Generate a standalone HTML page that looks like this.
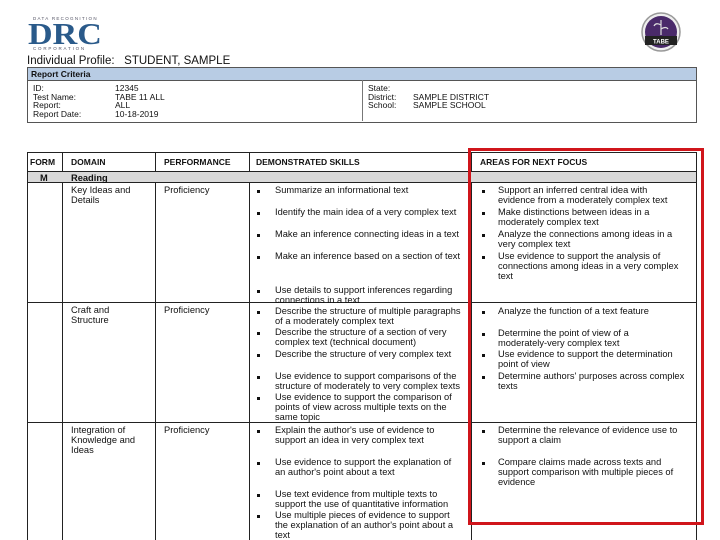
<!DOCTYPE html>
<html><head><style>
body{margin:0;width:720px;height:540px;background:#fff;position:relative;overflow:hidden;font-family:"Liberation Sans",sans-serif;color:#111}
.a{position:absolute;white-space:nowrap;font-size:9.3px;line-height:10px}
.b{font-weight:bold}
.l{position:absolute;background:#222}
.bu{position:absolute;width:3px;height:3px;background:#111}
.c{position:absolute;white-space:nowrap;font-size:8.5px;line-height:8.5px}
</style></head><body>
<div class="a" style="left:33px;top:16px;font-size:4.5px;line-height:5px;color:#556;letter-spacing:1.3px">DATA RECOGNITION</div>
<div class="a b" style="left:28px;top:20px;font-family:'Liberation Serif',serif;font-size:31px;line-height:28px;color:#2a5a8a;transform:scaleX(1.1);transform-origin:left">DRC</div>
<div class="a" style="left:33px;top:46px;font-size:4.5px;line-height:5px;color:#556;letter-spacing:1.8px">CORPORATION</div>
<svg style="position:absolute;left:640px;top:11px" width="42" height="42" viewBox="0 0 42 42">
<circle cx="21" cy="21" r="19" fill="#eee" stroke="#999" stroke-width="1.5"/>
<circle cx="21" cy="21" r="16" fill="#4a2a6a"/>
<rect x="5" y="25" width="32" height="9" fill="#222"/>
<text x="21" y="32.5" font-size="6" fill="#fff" text-anchor="middle" font-family="Liberation Sans" font-weight="bold">TABE</text>
<path d="M21 24 V9 M21 14 q-5 -3 -7 1 M21 18 q5 -3 7 0" stroke="#ddd" stroke-width="1.2" fill="none"/>
</svg>
<div class="a" style="left:27px;top:55px;font-size:11.5px;line-height:13px">Individual Profile:&nbsp;&nbsp; STUDENT, SAMPLE</div>
<div style="position:absolute;left:27px;top:67px;width:668px;height:54px;border:1px solid #555;"></div>
<div style="position:absolute;left:28px;top:68px;width:668px;height:12px;background:#b8cce4;border-bottom:1px solid #555"></div>
<div class="a b" style="left:31px;top:69px;font-size:8.5px">Report Criteria</div>
<div class="l" style="left:362px;top:80px;width:1px;height:41px;background:#777"></div>
<div class="c" style="left:33px;top:84px">ID:<br>Test Name:<br>Report:<br>Report Date:</div>
<div class="c" style="left:115px;top:84px">12345<br>TABE 11 ALL<br>ALL<br>10-18-2019</div>
<div class="c" style="left:368px;top:84px">State:<br>District:<br>School:</div>
<div class="c" style="left:413px;top:84px"><br>SAMPLE DISTRICT<br>SAMPLE SCHOOL</div>
<div style="position:absolute;left:28px;top:172px;width:668px;height:10px;background:#d9d9d9"></div>
<div class="l" style="left:27px;top:152px;width:670px;height:1px"></div>
<div class="l" style="left:27px;top:171px;width:670px;height:1px"></div>
<div class="l" style="left:27px;top:182px;width:670px;height:1px"></div>
<div class="l" style="left:27px;top:302px;width:670px;height:1px"></div>
<div class="l" style="left:27px;top:422px;width:670px;height:1px"></div>
<div class="l" style="left:27px;top:152px;width:1px;height:388px"></div>
<div class="l" style="left:62px;top:152px;width:1px;height:20px"></div>
<div class="l" style="left:62px;top:182px;width:1px;height:358px"></div>
<div class="l" style="left:155px;top:152px;width:1px;height:20px"></div>
<div class="l" style="left:155px;top:182px;width:1px;height:358px"></div>
<div class="l" style="left:249px;top:152px;width:1px;height:20px"></div>
<div class="l" style="left:249px;top:182px;width:1px;height:358px"></div>
<div class="l" style="left:471px;top:152px;width:1px;height:20px"></div>
<div class="l" style="left:471px;top:182px;width:1px;height:358px"></div>
<div class="l" style="left:696px;top:152px;width:1px;height:388px"></div>
<div class="a b" style="left:30px;top:157px;font-size:8.5px">FORM</div>
<div class="a b" style="left:71px;top:157px;font-size:8.5px">DOMAIN</div>
<div class="a b" style="left:164px;top:157px;font-size:8.5px">PERFORMANCE</div>
<div class="a b" style="left:256px;top:157px;font-size:8.5px">DEMONSTRATED SKILLS</div>
<div class="a b" style="left:480px;top:157px;font-size:8.5px">AREAS FOR NEXT FOCUS</div>
<div class="a b" style="left:40px;top:173px">M</div>
<div class="a b" style="left:71px;top:173px">Reading</div>
<div class="a" style="left:71px;top:185px">Key Ideas and<br>Details</div>
<div class="a" style="left:164px;top:185px">Proficiency</div>
<div class="a" style="left:71px;top:305px">Craft and<br>Structure</div>
<div class="a" style="left:164px;top:305px">Proficiency</div>
<div class="a" style="left:71px;top:425px">Integration of<br>Knowledge and<br>Ideas</div>
<div class="a" style="left:164px;top:425px">Proficiency</div>
<div class="bu" style="left:257px;top:190px"></div><div class="a" style="left:275px;top:185px">Summarize an informational text</div>
<div class="bu" style="left:257px;top:212px"></div><div class="a" style="left:275px;top:207px">Identify the main idea of a very complex text</div>
<div class="bu" style="left:257px;top:234px"></div><div class="a" style="left:275px;top:229px">Make an inference connecting  ideas in a text</div>
<div class="bu" style="left:257px;top:256px"></div><div class="a" style="left:275px;top:251px">Make an inference based on a section of text</div>
<div class="bu" style="left:257px;top:290px"></div><div class="a" style="left:275px;top:285px">Use details to support inferences regarding<br>connections in a text</div>
<div class="bu" style="left:257px;top:311px"></div><div class="a" style="left:275px;top:306px">Describe the structure of multiple paragraphs<br>of a moderately complex text</div>
<div class="bu" style="left:257px;top:332px"></div><div class="a" style="left:275px;top:327px">Describe the structure of a section of very<br>complex text (technical document)</div>
<div class="bu" style="left:257px;top:354px"></div><div class="a" style="left:275px;top:349px">Describe the structure of very complex text</div>
<div class="bu" style="left:257px;top:376px"></div><div class="a" style="left:275px;top:371px">Use evidence to support comparisons of the<br>structure of moderately to very complex texts</div>
<div class="bu" style="left:257px;top:397px"></div><div class="a" style="left:275px;top:392px">Use evidence to support the comparison of<br>points of view across multiple texts on the<br>same topic</div>
<div class="bu" style="left:257px;top:430px"></div><div class="a" style="left:275px;top:425px">Explain the author's use of evidence to<br>support an idea in very complex text</div>
<div class="bu" style="left:257px;top:462px"></div><div class="a" style="left:275px;top:457px">Use evidence to support the explanation of<br>an author's point about a text</div>
<div class="bu" style="left:257px;top:494px"></div><div class="a" style="left:275px;top:489px">Use text evidence from multiple texts to<br>support the use of quantitative information</div>
<div class="bu" style="left:257px;top:515px"></div><div class="a" style="left:275px;top:510px">Use multiple pieces of evidence to support<br>the explanation of an author's point about a<br>text</div>
<div class="bu" style="left:482px;top:190px"></div><div class="a" style="left:498px;top:185px">Support an inferred central idea with<br>evidence from a moderately complex text</div>
<div class="bu" style="left:482px;top:212px"></div><div class="a" style="left:498px;top:207px">Make distinctions between ideas in a<br>moderately complex text</div>
<div class="bu" style="left:482px;top:234px"></div><div class="a" style="left:498px;top:229px">Analyze the connections among ideas in a<br>very complex text</div>
<div class="bu" style="left:482px;top:256px"></div><div class="a" style="left:498px;top:251px">Use evidence to support the analysis of<br>connections among ideas in a very complex<br>text</div>
<div class="bu" style="left:482px;top:311px"></div><div class="a" style="left:498px;top:306px">Analyze the function of a text feature</div>
<div class="bu" style="left:482px;top:333px"></div><div class="a" style="left:498px;top:328px">Determine the point of view of a<br>moderately-very complex text</div>
<div class="bu" style="left:482px;top:354px"></div><div class="a" style="left:498px;top:349px">Use evidence to support the determination<br>point of view</div>
<div class="bu" style="left:482px;top:376px"></div><div class="a" style="left:498px;top:371px">Determine authors' purposes across complex<br>texts</div>
<div class="bu" style="left:482px;top:430px"></div><div class="a" style="left:498px;top:425px">Determine the relevance of evidence use to<br>support a claim</div>
<div class="bu" style="left:482px;top:462px"></div><div class="a" style="left:498px;top:457px">Compare claims made across texts and<br>support comparison with multiple pieces of<br>evidence</div>
<div style="position:absolute;left:468px;top:148px;width:230px;height:371px;border:3px solid #d0151b"></div>
</body></html>
